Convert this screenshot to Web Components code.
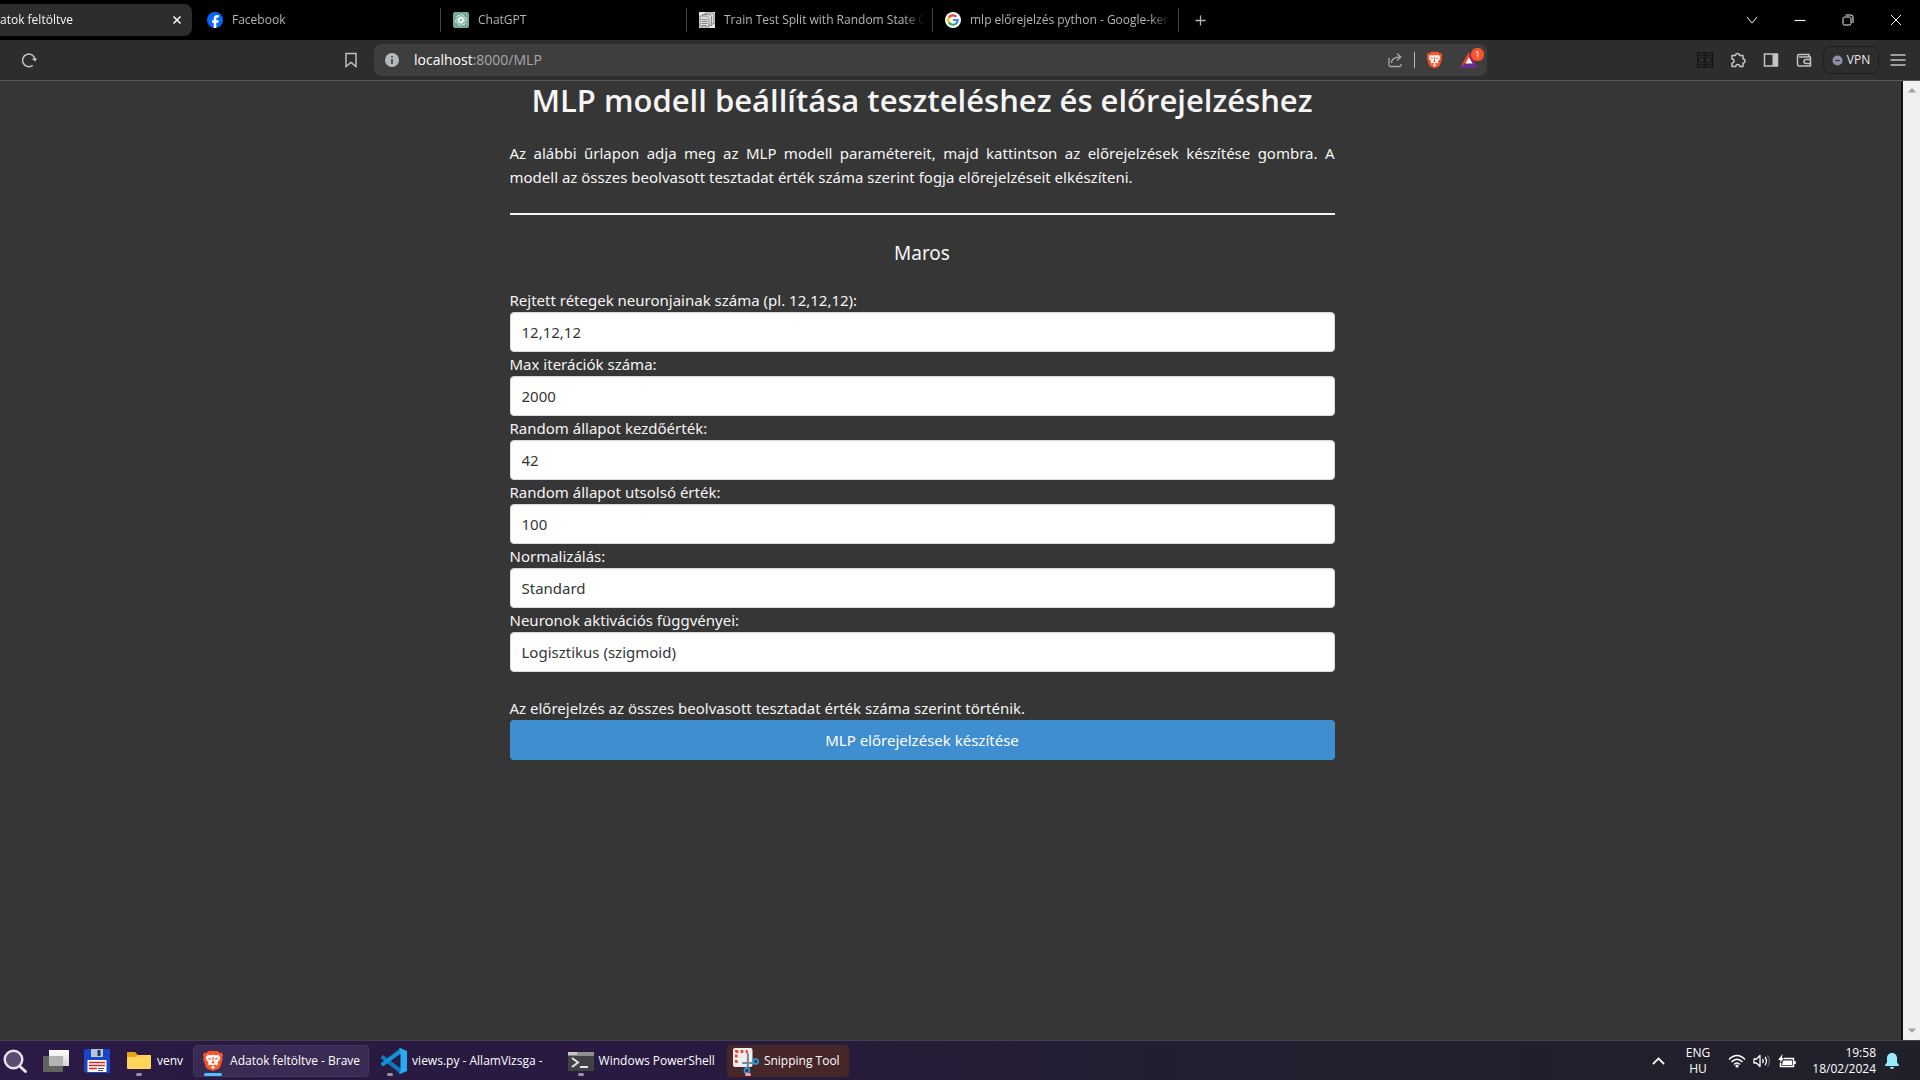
<!DOCTYPE html>
<html lang="hu">
<head>
<meta charset="utf-8">
<title>Adatok feltöltve</title>
<style>
  html, body { margin: 0; height: 100%; }
  body { display: flex; flex-direction: column; overflow: hidden; background: #363636; color: #fff;
    font: 12px/16px "Open Sans", "Noto Sans", sans-serif; }
</style>
</head>
<body>
<tab-strip>
  <browser-tab active>atok feltöltve</browser-tab>
  <browser-tab icon="facebook">Facebook</browser-tab>
  <browser-tab icon="chatgpt">ChatGPT</browser-tab>
  <browser-tab icon="docs">Train Test Split with Random State 0:</browser-tab>
  <browser-tab icon="google">mlp előrejelzés python - Google-keresés</browser-tab>
</tab-strip>
<browser-toolbar></browser-toolbar>
<page-view>
  <mlp-page></mlp-page>
</page-view>
<task-bar>
  <task-item icon="search"></task-item>
  <task-item icon="taskview"></task-item>
  <task-item icon="floppy"></task-item>
  <task-item icon="folder" running>venv</task-item>
  <task-item icon="brave" active>Adatok feltöltve - Brave</task-item>
  <task-item icon="vscode" running>views.py - AllamVizsga -</task-item>
  <task-item icon="terminal" running>Windows PowerShell</task-item>
  <task-item icon="snip" alert>Snipping Tool</task-item>
</task-bar>

<script>
const line = 'fill="none" stroke="currentColor"';
const braveBody = `
  <path fill="#fb542b" d="M7 1h10l2.2 2.4 2.1-.5 1.7 3-1 2.3.7 2-2.6 8.6c-.4 1.2-1 2-2 2.7L12 24l-6.100-2.500c-1-.7-1.600-1.500-2-2.700L1.300 10.200l.7-2-1-2.300 1.700-3 2.100.5z"/>
  <path fill="#fff" d="M6 5.500l3 .6L12 5.300l3 .8 3-.6 2 3.200-.8 2.400-2.400 3 .6 2.200-1.400 1.200-2-1.100L12 18l-2-1.600-2 1.100-1.400-1.200.6-2.200-2.400-3L4 8.700zM12 18.200l2.600 1.300L12 21.500l-2.600-2z"/>
  <path fill="#fb542b" d="M6.500 8.800l3.700.8-.6 1.300-2-.2zM17.500 8.800l-3.700.8.6 1.300 2-.2zM11.300 8h1.400l-.2 5 1.500 1.300-2 1.200-2-1.200 1.500-1.300z"/>`;
const icons = {
  close: ['0 0 10 10', `<path ${line} stroke-width="1.600" d="M1.500 1.500l7 7M8.500 1.500l-7 7"/>`],
  facebook: ['0 0 16 16', `<circle cx="8" cy="8" r="8" fill="#0866ff"/><path fill="#fff" d="M6.700 16v-5.300H5V8.300h1.700V7c0-2.700 1.200-3.900 3.700-3.900.5 0 1.100.1 1.500.2v2.200h-1c-1.200 0-1.600.5-1.600 1.600v1.200h2.500l-.5 2.400h-2V16z"/>`],
  chatgpt: ['0 0 16 16', `<rect width="16" height="16" rx="2" fill="#74aa9c"/><g fill="none" stroke="#fff" stroke-width=".8"><path d="M8 2.500c2 0 3 1.300 3 2.600v3.200L8 10 5.200 8.400"/><path d="M12.800 5.200c1 1.700.3 3.300-.8 3.900l-2.900 1.600-2.900-1.700V5.800"/><path d="M12.800 10.800c-1 1.700-2.700 2-3.900 1.300L6.200 10.500V7.200L9 5.600"/><path d="M8 13.500c-2 0-3-1.300-3-2.600V7.700L8 6l2.800 1.600"/><path d="M3.200 10.800c-1-1.700-.3-3.300.8-3.900l2.900-1.600 2.900 1.700v3.200"/><path d="M3.200 5.200c1-1.700 2.700-2 3.900-1.300l2.700 1.600v3.300L7 10.400"/></g>`],
  docs: ['0 0 16 16', `<path fill="#e8e8e8" d="M0 0h16v16H0z"/><g fill="#ddd" stroke="#777" stroke-width=".8"><path d="M6 1h8l1 1v10H6z"/><path d="M3.500 2.500h7l2 2v9h-9z"/><path d="M1 4h6.500L10 6.500V15H1z"/></g><path stroke="#888" d="M2.500 7.500h6M2.500 9.500h6M2.500 11.500h6M2.500 13.500h5"/>`],
  google: ['0 0 16 16', `<circle cx="8" cy="8" r="8" fill="#fff"/><g fill="none" stroke-width="2.200"><path stroke="#ea4335" d="M3.900 5.600A4.700 4.700 0 0 1 11.300 4.700"/><path stroke="#fbbc05" d="M3.900 10.400a4.700 4.700 0 0 1 0-4.800"/><path stroke="#34a853" d="M11 11.600a4.700 4.700 0 0 1-7.100-1.200"/><path stroke="#4285f4" d="M8 8h4.700c0 1.500-.6 2.800-1.700 3.600"/></g>`],
  plus: ['0 0 12 12', `<path ${line} stroke-width="1.400" d="M6 .5v11M.5 6h11"/>`],
  down: ['0 0 12 12', `<path ${line} d="M1 3l5 6 5-6"/>`],
  min: ['0 0 12 12', `<path ${line} stroke-width="1.200" d="M.5 6.500h11"/>`],
  restore: ['0 0 12 12', `<rect ${line} x="1" y="3" width="8" height="8" rx="1.500"/><path ${line} d="M3.500 1h5.500a2 2 0 0 1 2 2v6"/>`],
  exit: ['0 0 12 12', `<path ${line} d="M1 1l10 10M11 1L1 11"/>`],
  reload: ['0 0 16 16', `<path ${line} stroke-width="1.500" d="M11.700 13.300A6.300 6.300 0 1 1 14 7"/><path fill="currentColor" d="M10.500 6.500h5.500L14.200 9.500z"/>`],
  bookmark: ['0 0 16 16', `<path ${line} stroke-width="1.400" d="M3 1.500h10v13l-5-4-5 4z"/>`],
  info: ['0 0 16 16', `<circle cx="8" cy="8" r="7" fill="#b4b8bd"/><path stroke="#3e3e3e" stroke-width="1.600" d="M8 7v5M8 4v1.600"/>`],
  share: ['0 0 16 16', `<path ${line} stroke-width="1.300" d="M2 6v7q0 1.500 1.500 1.500h9q1.500 0 1.500-1.500v-1M4.500 11c0-4 3-6 9-6M10 1.500L13.800 5 10 8.500"/>`],
  brave: ['0 0 24 25', braveBody],
  bat: ['0 0 20 18', `<path fill="#ff4724" d="M10 0l3.300 5.700L7 11 0 18z"/><path fill="#9e1f63" d="M10 0l10 18-7-6-3-6z"/><path fill="#662d91" d="M0 18l6-6h8l6 6z"/><path fill="#fff" d="M10 6l4 7H6z"/>`],
  ext: ['0 0 16 16', `<g ${line} stroke-width="1"><rect x=".5" y=".5" width="15" height="15"/><path d="M.5 3h15M.5 13h15M8 .5v15"/><circle cx="4.500" cy="8" r="3"/><circle cx="11.500" cy="8" r="3"/></g>`],
  puzzle: ['0 0 16 16', `<path ${line} stroke-width="1.500" stroke-linejoin="round" d="M2 3.500h3.500a2 2 0 1 1 4 0H13V7a2 2 0 1 1 0 4v3.500H9.800a2 2 0 0 0-4 0H2V11a2 2 0 0 0 0-4z"/>`],
  panel: ['0 0 16 16', `<rect ${line} stroke-width="1.500" x="1.500" y="2" width="13" height="12"/><path fill="currentColor" d="M9.500 2h5v12h-5z"/>`],
  wallet: ['0 0 16 16', `<path ${line} stroke-width="1.500" stroke-linejoin="round" d="M13 5V2.500H3A1.500 1.500 0 0 0 1.500 4v8.500A1.500 1.500 0 0 0 3 14h11.500V5H3M14.500 7.500H10a1.500 1.500 0 0 0 0 4h4.500"/>`],
  vpn: ['0 0 12 12', `<circle cx="6" cy="6" r="5.500" fill="#8e8fa8"/><path stroke="#333" stroke-width="1.400" d="M3.500 6h5"/>`],
  menu: ['0 0 16 16', `<path ${line} stroke-width="1.400" d="M.5 3h15M.5 8h15M.5 13h15"/>`],
  up: ['0 0 10 6', `<path fill="#a0a0a0" d="M1 5.500h8L5 1z"/>`],
  dn: ['0 0 10 6', `<path fill="#a0a0a0" d="M1 .5h8L5 5z"/>`],
  search: ['0 0 26 26', `<circle cx="11.500" cy="11.500" r="8.800" fill="#5a4b70" stroke="#e6e3ea" stroke-width="2.400"/><path stroke="#e6e3ea" stroke-width="3" stroke-linecap="round" d="M18 18.500l5.500 5"/>`],
  taskview: ['0 0 26 26', `<defs><linearGradient id="a" x2="0" y2="1"><stop stop-color="#fff"/><stop offset="1" stop-color="#d5d5d5"/></linearGradient></defs><path fill="#626262" d="M0 8h20v16H0z"/><path fill="url(#a)" d="M6 2h20v16H6z"/><path fill="#b3b3b3" d="M6 8h14v10H6z"/>`],
  floppy: ['0 0 26 26', `<path fill="#1747c8" d="M2 1h23l1 1v23H2l-2-2V2z"/><path fill="#b8c6da" d="M7 1h12v8H7z"/><path fill="#23375c" d="M13.500 2h3v6h-3z"/><path fill="#fff" d="M3.500 12h19v12h-19z"/><path stroke="#d8252e" stroke-width="1.300" d="M5 14.500h16M5 17.500h16M5 20.500h8"/><path stroke="#555" d="M14 20.500h6M14 22.500h5"/>`],
  folder: ['0 0 26 26', `<path fill="#e8a317" d="M1 5q0-1 1-1h7l3 3h12q1 0 1 1v3H1z"/><path fill="#ffd35c" d="M1 9h9l2.500-2H24q1 0 1 1v12q0 1-1 1H2q-1 0-1-1z"/>`],
  vscode: ['0 0 26 26', `<path fill="#0f78bd" d="M0 9l2-2 18 13.500V26L0 10.500z"/><path fill="#1590d8" d="M0 16.500l2 2L20 5.500V0L0 15z"/><path fill="#2aa9f3" d="M19 0l7 3v20l-7 3-2-1.500c1.500.6 2.500 0 2.500-1.500V3c0-1.500-1-2.100-2.500-1.500z"/>`],
  terminal: ['0 0 26 26', `<path fill="#404246" d="M0 4h26v19H0z"/><path fill="#c8c8c8" d="M0 4h26v3.500H0z"/><path fill="#919191" d="M9 4h17v3.500H9z"/><path fill="none" stroke="#e5e5e5" stroke-width="2" d="M4 10l6 4.500L4 19M12 19h8"/>`],
  snip: ['0 0 28 26', `<rect width="21" height="19" rx="2" fill="#eee"/><path fill="none" stroke="#e5482b" stroke-width="3" stroke-dasharray="3 2.400" d="M3.500 15V3.500H16"/><path stroke="#7a8894" stroke-width="2.200" d="M16 5v14M10 15h14"/><g fill="none" stroke="#2894d8" stroke-width="2"><circle cx="24.500" cy="13.500" r="2.600"/><circle cx="15" cy="22.500" r="2.600"/></g>`],
  caret: ['0 0 14 8', `<path ${line} stroke-width="1.800" d="M1 7l6-5.500L13 7"/>`],
  wifi: ['0 0 18 14', `<g ${line} stroke-width="1.500"><path d="M1 5.500q8-8 16 0M3.500 8q5.500-5.500 11 0M6 10.500q3-3 6 0"/></g><circle cx="9" cy="12" r="1.600" fill="currentColor"/>`],
  sound: ['0 0 18 14', `<path ${line} stroke-width="1.300" stroke-linejoin="round" d="M1 5v4h2.500L7 12.500v-11L3.500 5zM9.500 5q1.500 2 0 4M12 3q3 4 0 8"/><path fill="none" stroke="#666" stroke-width="1.300" d="M14.500 1.500q4 5.500 0 11"/>`],
  battery: ['0 0 18 14', `<path ${line} stroke-width="1.500" d="M6 4.500h9.500v8H2.500V9M17 7v3"/><path fill="currentColor" d="M5 6.500h9v4.500H4zM4.500 0L0 6h2.500L2 9l4-5H4z"/>`],
  bell: ['0 0 14 16', `<path fill="#99ebff" d="M7 0c3 0 5 2.200 5 5v4.500l2 2.500v1H0v-1l2-2.500V5c0-2.800 2-5 5-5zM4.800 14h4.400c-.3 1.200-1.100 1.900-2.200 1.900S5.100 15.200 4.800 14z"/>`]
};

/* Shared base: clones the class's markup into an open shadow root. */
class BaseElement extends HTMLElement {
  connectedCallback() {
    if (this.shadowRoot) return;
    const t = document.createElement('template');
    t.innerHTML = `<style>*{box-sizing:border-box}button{font:inherit;color:inherit;background:none;border:0;padding:0;margin:0;display:flex;align-items:center;justify-content:center}${this.css()}</style>${this.html()}`;
    this.attachShadow({ mode: 'open' }).append(t.content.cloneNode(true));
  }
}
const define = (name, css, html) => customElements.define(name, class extends BaseElement {
  css() { return css; }
  html() { return html(this); }
});
const ic = (name, w, h = w) => `<ui-icon name="${name}" style="--w:${w}px;--h:${h}px"></ui-icon>`;
const btn = (label, name, w, h) => `<button aria-label="${label}">${ic(name, w, h)}</button>`;

define('ui-icon', `:host{display:block;flex:none;width:var(--w);height:var(--h)}svg{display:block;width:100%;height:100%}`,
  e => { const [box, body] = icons[e.getAttribute('name')]; return `<svg viewBox="${box}" preserveAspectRatio="none" aria-hidden="true">${body}</svg>`; });

define('tab-strip', `
  :host{display:flex;flex:none;height:40px;background:#000;color:#b4b4b4;align-items:center}
  .new{width:42px;height:32px}
  .win{display:flex;margin-left:auto;height:28px;color:#f2f2f2}
  .win button{width:48px}`,
  () => `<slot></slot><button class="new" aria-label="Új lap">${ic('plus', 11)}</button>
    <div class="win">${btn('Lapok', 'down', 12)}${btn('Kis méret', 'min', 12)}${btn('Visszaállítás', 'restore', 12)}${btn('Bezárás', 'exit', 12)}</div>`);

define('browser-tab', `
  :host{display:flex;flex:0 0 246px;min-width:0;height:24px;align-items:center;gap:9px;padding:0 8px 0 12px;box-sizing:border-box;border-right:1px solid #444}
  :host([active]){flex-basis:192px;height:32px;padding:0 10px 0 0;margin-right:3px;background:#2d2d2d;border:0;border-radius:0 8px 8px 0;color:#f5f5f5}
  span{flex:1;overflow:hidden;white-space:nowrap;mask-image:linear-gradient(90deg,#000 calc(100% - 20px),transparent)}`,
  e => e.hasAttribute('active')
    ? `<span><slot></slot></span>${btn('Lap bezárása', 'close', 10)}`
    : `${ic(e.getAttribute('icon'), 16)}<span><slot></slot></span>`);

define('browser-toolbar', `
  :host{display:flex;flex:none;height:41px;box-sizing:border-box;align-items:center;background:#2d2d2d;border-bottom:1px solid #5a5a5a;color:#c4c4c4;padding:0 14px 0 21px}
  .mark{margin:0 15px 0 306px}
  .bar{display:flex;align-items:center;flex:1;height:32px;background:#3e3e3e;border-radius:8px;padding:0 9px 0 10px;color:#a8a8a8}
  .url{flex:1;margin-left:14px;font-size:14px}
  .url b{font-weight:400;color:#fff}
  .sep{width:1px;height:16px;background:#bbb;margin:0 11px}
  .bat{position:relative;margin-left:17px}
  .bat span{position:absolute;left:11px;top:-4px;width:13px;height:13px;border-radius:6px;background:#fb542b;color:#fff;font:9px/13px "Open Sans",sans-serif;text-align:center}
  .tools{display:flex;align-items:center;gap:17px;margin-left:210px}
  .dim{color:#111}
  .vpn{gap:4px;width:56px;height:28px;border:1px solid #1e1e1e;border-radius:8px;color:#e8e8e8;margin:0 -6px}`,
  () => `${btn('Frissítés', 'reload', 16)}
    <button class="mark" aria-label="Könyvjelző">${ic('bookmark', 16)}</button>
    <div class="bar">${ic('info', 16)}<div class="url"><b>localhost</b>:8000/MLP</div>
      ${btn('Megosztás', 'share', 16)}<i class="sep"></i>${btn('Brave Shields', 'brave', 17, 18)}
      <button class="bat" aria-label="Brave Rewards">${ic('bat', 18, 16)}<span>1</span></button></div>
    <div class="tools"><button class="dim" aria-label="Bővítmény">${ic('ext', 16)}</button>${btn('Bővítmények', 'puzzle', 16)}${btn('Oldalsáv', 'panel', 16)}${btn('Tárca', 'wallet', 16)}
      <button class="vpn">${ic('vpn', 11)}VPN</button>${btn('Menü', 'menu', 16)}</div>`);

define('page-view', `
  :host{display:flex;flex:1;min-height:0;background:#363636}
  main{flex:1;min-width:0;padding-right:57px}
  .scroll{flex:none;width:19px;background:#f0f0f0;border-left:2px solid #111;display:flex;flex-direction:column;justify-content:space-between;align-items:center;padding:6px 0}`,
  () => `<main><slot></slot></main><div class="scroll">${ic('up', 10, 6)}${ic('dn', 10, 6)}</div>`);

define('mlp-page', `
  :host{display:block;max-width:825px;margin:0 auto;color:#f5f5f5;font:15px/24px "Noto Sans","Open Sans",sans-serif}
  h1{margin:0 0 22px;font:600 31px/38px "Open Sans","Noto Sans",sans-serif;text-align:center;white-space:nowrap}
  p{margin:0}
  .intro{text-align:justify}
  hr{margin:24px 0;border:0;height:2px;background:#f5f5f5}
  h2{margin:0 0 21px;font-size:19px;line-height:28px;font-weight:400;text-align:center}
  .note{margin-top:24px}
  .send{width:100%;height:40px;background:#3e8ed0;color:#fff;border-radius:4px}`,
  () => `<h1>MLP modell beállítása teszteléshez és előrejelzéshez</h1>
    <p class="intro">Az alábbi űrlapon adja meg az MLP modell paramétereit, majd kattintson az előrejelzések készítése gombra. A modell az összes beolvasott tesztadat érték száma szerint fogja előrejelzéseit elkészíteni.</p>
    <hr><h2>Maros</h2>
    <form>
      <form-field label="Rejtett rétegek neuronjainak száma (pl. 12,12,12):" value="12,12,12"></form-field>
      <form-field label="Max iterációk száma:" value="2000"></form-field>
      <form-field label="Random állapot kezdőérték:" value="42"></form-field>
      <form-field label="Random állapot utsolsó érték:" value="100"></form-field>
      <form-field select label="Normalizálás:" value="Standard"></form-field>
      <form-field select label="Neuronok aktivációs függvényei:" value="Logisztikus (szigmoid)"></form-field>
      <p class="note">Az előrejelzés az összes beolvasott tesztadat érték száma szerint történik.</p>
      <button class="send" type="button">MLP előrejelzések készítése</button>
    </form>`);

define('form-field', `
  :host{display:block}
  label{display:block}
  input,select{display:block;width:100%;height:40px;margin:0;padding:0 11px;border:1px solid #dbdbdb;border-radius:4px;background:#fff;color:#363636;font:inherit;appearance:none;box-shadow:inset 0 1px 2px rgba(10,10,10,.05)}`,
  e => { const v = e.getAttribute('value'); return `<label for="c">${e.getAttribute('label')}</label>` +
    (e.hasAttribute('select') ? `<select id="c"><option>${v}</option></select>` : `<input id="c" type="text" value="${v}">`); });

define('task-bar', `
  :host{display:flex;flex:none;height:40px;box-sizing:border-box;align-items:center;border-top:1px solid #45404f;background:linear-gradient(90deg,#2b1a45,#281a40 35%,#221e30 60%,#20202a);color:#fff}
  .tray{display:flex;align-items:center;margin-left:auto;padding-right:21px}
  .lang{margin:0 18px 0 21px;text-align:center}
  .net{gap:7px}
  .clock{margin:0 9px 0 16px;text-align:right}`,
  () => `<slot></slot><div class="tray">${btn('Rejtett ikonok', 'caret', 13, 8)}
    <div class="lang">ENG<br>HU</div><button class="net" aria-label="Hálózat, hang, akkumulátor">${ic('wifi', 18, 14)}${ic('sound', 18, 14)}${ic('battery', 18, 14)}</button>
    <div class="clock">19:58<br>18/02/2024</div>${btn('Értesítések', 'bell', 14, 16)}</div>`);

define('task-item', `
  :host{display:block;flex:none}
  button{position:relative;height:32px;gap:5px;padding:0 8px;white-space:nowrap;border-radius:4px}
  :host([icon=search]) button{padding:0 7px 0 2px}
  :host([icon=taskview]) button{padding:0 7px 0 8px}
  :host([icon=folder]) button{padding:0 10px 0 8px}
  :host([active]) button{background:#3a2b54;border:1px solid #44365c;gap:6px}
  :host([alert]) button{background:#472629;padding:0 9px 0 6px}
  :host([icon=vscode]) button{padding-left:12px}
  :host([icon=vscode]){margin-right:9px}
  :host([icon=terminal]){margin-right:4px}
  i{position:absolute;left:18px;bottom:1px;width:6px;height:3px;border-radius:2px;background:#9b93a8}
  :host([active]) i{left:10px;bottom:0;width:18px;background:#4cc2ff}
  :host([alert]) i{background:#ff99a4}`,
  e => `<button aria-label="${e.textContent || e.getAttribute('icon')}">${ic(e.getAttribute('icon'), e.getAttribute('icon') === 'brave' ? 22 : 26)}<slot></slot>${e.matches('[running],[active],[alert]') ? '<i></i>' : ''}</button>`);
</script>
</body>
</html>
